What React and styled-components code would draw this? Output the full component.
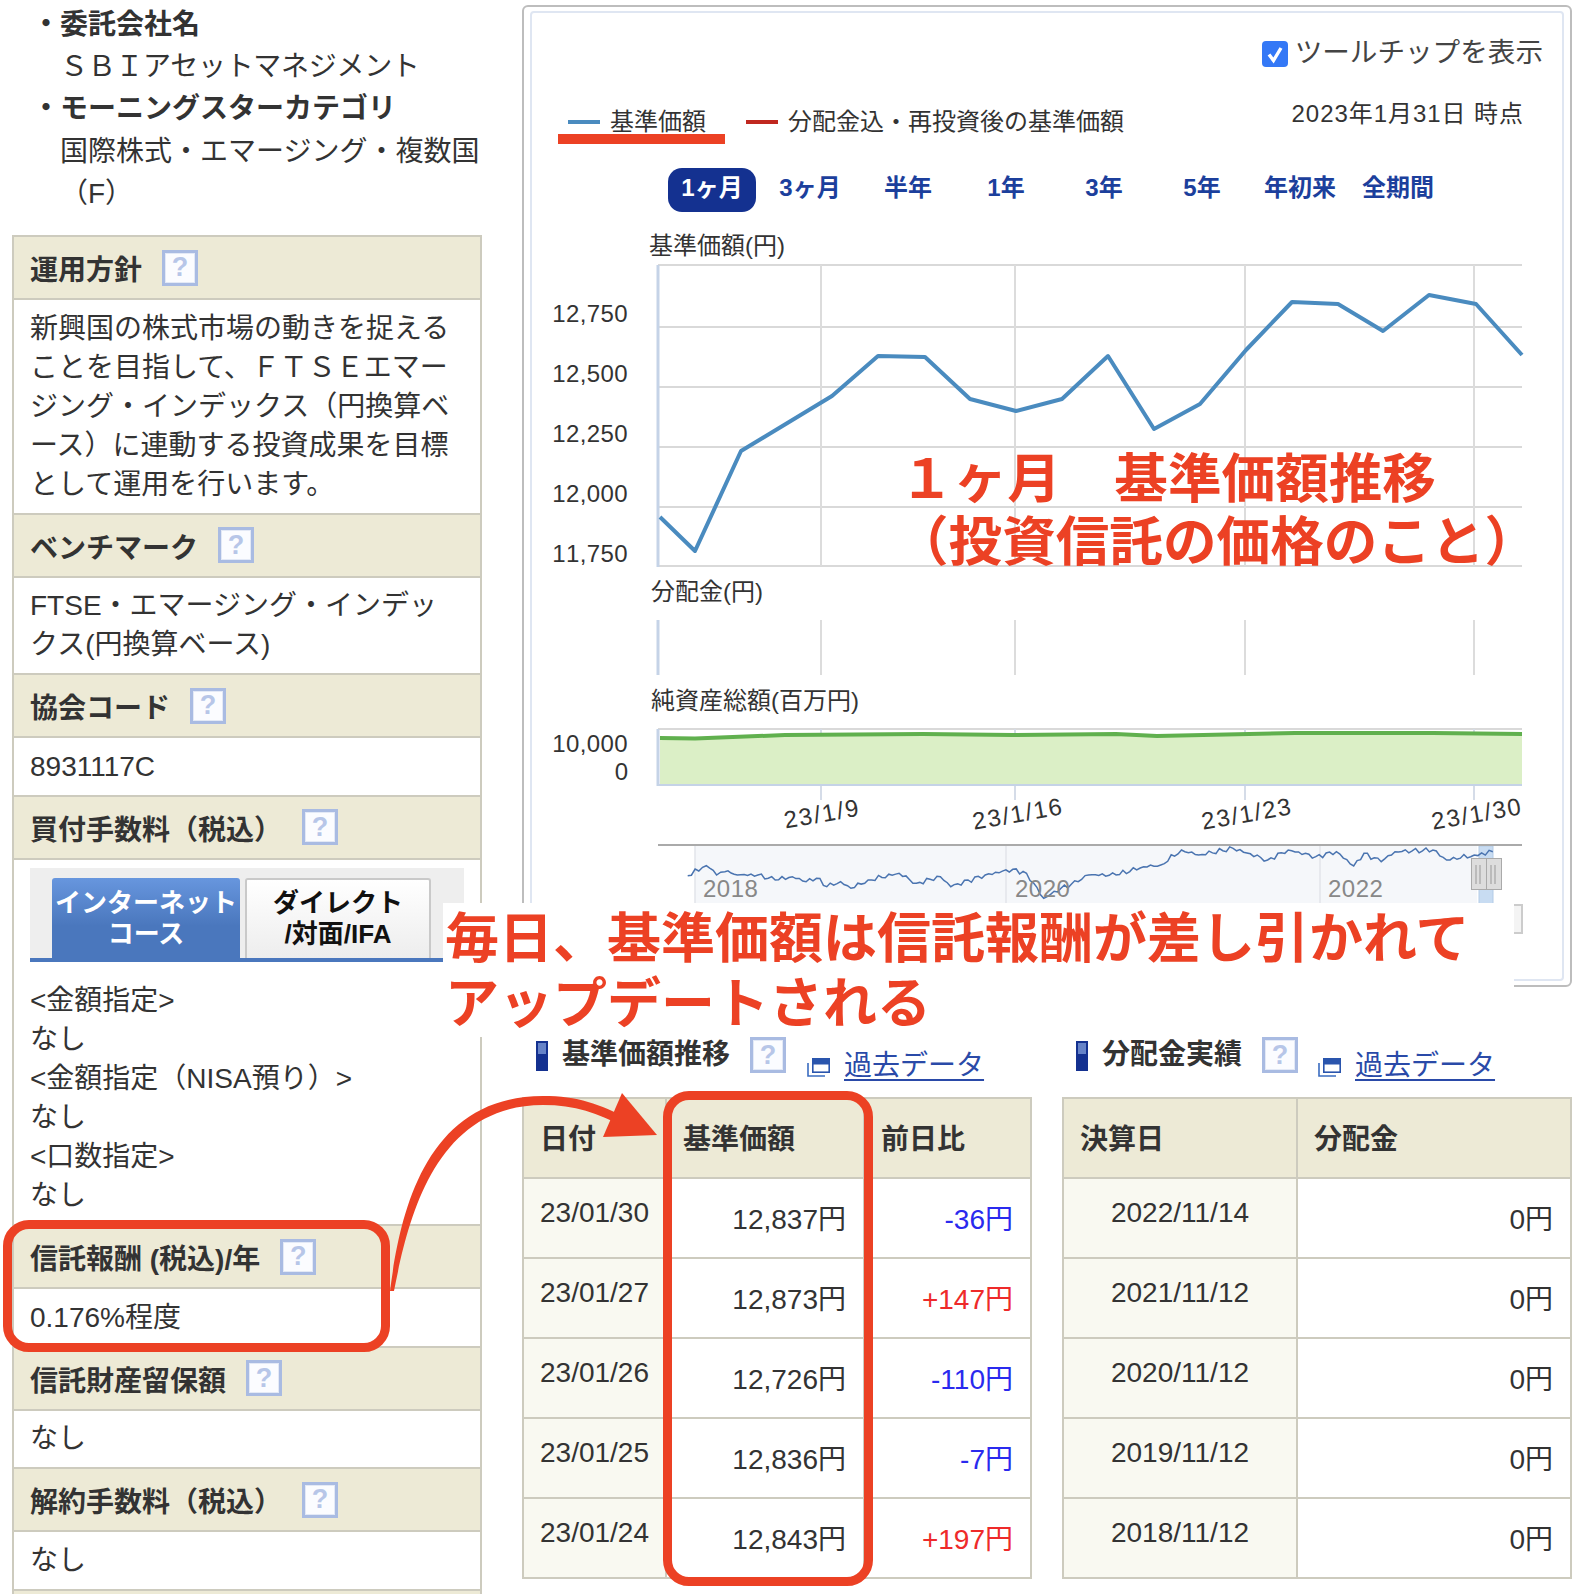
import React from 'react';
import styled, { createGlobalStyle } from 'styled-components';

const RED = '#ec4124';
const LINE = '#cdcbbe';
const HEAD_BG = '#edead6';
const NAVY = '#143190';

const GlobalStyle = createGlobalStyle`
  html, body {
    margin: 0;
    padding: 0;
    background: white;
  }
  body {
    font-family: "Liberation Sans", "Noto Sans CJK JP", sans-serif;
    color: #333;
  }
`;

const Page = styled.div`
  position: relative;
  width: 1590px;
  height: 1594px;
  overflow: hidden;
  display: flex;
  align-items: flex-start;
  font-size: 28px;
  line-height: 39px;
`;

const LeftColumn = styled.div`
  width: 470px;
  margin-left: 12px;
`;

const RightColumn = styled.div`
  width: 1050px;
  margin-left: 40px;
  padding-top: 5px;
`;

/* left column */
const InfoList = styled.ul`
  list-style: none;
  margin: 0;
  padding: 4px 0 0 48px;
  height: 235px;
  box-sizing: border-box;
  line-height: 42.2px;
`;

const InfoTerm = styled.li`
  font-weight: bold;
  position: relative;
  &::before {
    content: '・';
    position: absolute;
    left: -28px;
    top: 0;
  }
`;

const InfoValue = styled.li`
  letter-spacing: ${(p) => p.$spacing || 0}px;
`;

const SectionHead = styled.div`
  height: 65px;
  box-sizing: border-box;
  border: 2px solid ${LINE};
  background: ${HEAD_BG};
  padding-left: 16px;
  display: flex;
  align-items: center;
  gap: 20px;
  font-weight: bold;
  white-space: nowrap;
`;

const SectionName = styled.span`
  margin-top: 6px;
`;

const SectionBody = styled.div`
  border-left: 2px solid ${LINE};
  border-right: 2px solid ${LINE};
  padding: 8.5px 16px 9px;
`;

const Help = styled.span`
  display: inline-flex;
  flex: none;
  align-items: center;
  justify-content: center;
  width: 36px;
  height: 36px;
  box-sizing: border-box;
  border: 3px solid #a9bbe2;
  background: #fbfcff;
  box-shadow: inset 0 0 0 1px #e3e9f6;
  color: #b7c6e8;
  font: bold 27px/1 "Liberation Sans", sans-serif;
`;

const TabBar = styled.div`
  height: 94px;
  box-sizing: border-box;
  background: #eeeeee;
  padding: 10px 0 0 22px;
  border-bottom: 4px solid #4a77bd;
  display: flex;
  gap: 5px;
  margin-bottom: 19px;
`;

const Tab = styled.div`
  width: ${(p) => (p.$active ? 188 : 186)}px;
  box-sizing: border-box;
  padding-top: ${(p) => (p.$active ? 10 : 8)}px;
  border-radius: 3px 3px 0 0;
  text-align: center;
  font-size: 26px;
  line-height: 31px;
  font-weight: bold;
  color: ${(p) => (p.$active ? 'white' : '#111')};
  background: ${(p) =>
    p.$active
      ? 'linear-gradient(#6796de, #4a77bd 60%)'
      : 'linear-gradient(#ffffff, #ededed)'};
  border: ${(p) => (p.$active ? 'none' : '2px solid #c9c9c9')};
  border-bottom: none;
  white-space: nowrap;
`;

/* chart frame */
const Frame = styled.div`
  width: 1050px;
  height: 982px;
  box-sizing: border-box;
  border: 2px solid #bdbdbd;
  border-radius: 6px;
  padding: 4px 6px;
`;

const FrameInner = styled.div`
  height: 100%;
  box-sizing: border-box;
  border: 2px solid #dfe6f2;
  border-radius: 4px;
  overflow: hidden;
`;

const ToolRow = styled.div`
  display: flex;
  justify-content: flex-end;
  align-items: center;
  gap: 7px;
  height: 26px;
  margin-top: 26px;
  padding-right: 19px;
  font-size: 27.6px;
  color: #444;
  white-space: nowrap;
`;

const CheckBox = styled.span`
  width: 26px;
  height: 26px;
  margin-top: 4px;
  border-radius: 4px;
  background: #3478f6;
  display: flex;
  align-items: center;
  justify-content: center;
`;

const LegendRow = styled.div`
  display: flex;
  height: 44px;
  margin-top: 35px;
  padding: 0 38px 0 36px;
  font-size: 24px;
  line-height: 44px;
  white-space: nowrap;
`;

const LegendItem = styled.div`
  display: flex;
  align-items: center;
  gap: 10px;
  margin-right: 40px;
`;

const LegendSwatch = styled.span`
  width: 32px;
  height: 4px;
  background: ${(p) => p.$color};
`;

const AsOf = styled.div`
  margin-left: auto;
  margin-top: 1px;
  line-height: 26px;
  height: 26px;
  letter-spacing: 0.95px;
`;

const RangeTabs = styled.div`
  display: grid;
  grid-template-columns: repeat(8, 98px);
  height: 44px;
  margin-top: 24px;
  padding-left: 131px;
`;

const RangeTab = styled.div`
  width: 88px;
  justify-self: center;
  border-radius: 14px;
  text-align: center;
  font-size: 24px;
  line-height: 40px;
  font-weight: bold;
  white-space: nowrap;
  color: ${(p) => (p.$active ? 'white' : '#1c3f9c')};
  background: ${(p) => (p.$active ? NAVY : 'transparent')};
`;

const ChartSvg = styled.svg`
  display: block;
`;

const ChartText = styled.text`
  font-family: "Liberation Sans", "Noto Sans CJK JP", sans-serif;
  font-size: 24px;
  font-kerning: none;
  letter-spacing: ${(p) => p.$spacing || 0}px;
  fill: ${(p) => p.$fill || '#333'};
`;

/* lower tables */
const Panels = styled.div`
  display: flex;
  gap: 32px;
  margin-top: 50px;
`;

const Panel = styled.div`
  width: 508px;
`;

const PanelTitle = styled.div`
  display: flex;
  align-items: flex-start;
  height: 60px;
  padding-left: 14px;
  white-space: nowrap;
`;

const Mark = styled.span`
  position: relative;
  flex: none;
  width: 12px;
  height: 30px;
  margin-top: 4px;
  background: ${NAVY};
  &::before {
    content: '';
    position: absolute;
    left: 2px;
    top: 2px;
    width: 8px;
    height: 11px;
    background: #6683c8;
  }
`;

const PanelName = styled.span`
  margin-left: 14px;
  font-weight: bold;
  line-height: 36px;
`;

const TitleHelp = styled(Help)`
  margin-left: 20px;
`;

const LinkIcon = styled.svg`
  flex: none;
  margin: 20px 0 0 ${(p) => p.$left}px;
`;

const HistoryLink = styled.a`
  margin: 9px 0 0 14px;
  color: #2a4aa8;
  text-decoration: underline;
  text-underline-offset: 4px;
  line-height: 39px;
`;

const Table = styled.table`
  width: 508px;
  table-layout: fixed;
  border-collapse: collapse;
  border: 2px solid ${LINE};
`;

const Th = styled.th`
  width: ${(p) => p.$w}px;
  height: 80px;
  box-sizing: border-box;
  padding: 2px 0 0 16px;
  border: 2px solid ${LINE};
  background: ${HEAD_BG};
  text-align: left;
  font-weight: bold;
`;

const DateCell = styled.td`
  height: 80px;
  box-sizing: border-box;
  vertical-align: top;
  padding: 14px 0 0;
  border: 2px solid ${LINE};
  background: #f9f9f1;
  text-align: center;
  white-space: nowrap;
`;

const ValueCell = styled.td`
  height: 80px;
  box-sizing: border-box;
  vertical-align: top;
  padding: 21px 17px 0 0;
  border: 2px solid ${LINE};
  text-align: right;
  white-space: nowrap;
  color: ${(p) => p.$color || '#333'};
`;

/* red notes drawn over the page */
const RedBox = styled.div`
  position: absolute;
  box-sizing: border-box;
  left: ${(p) => p.$x}px;
  top: ${(p) => p.$y}px;
  width: ${(p) => p.$w}px;
  height: ${(p) => p.$h}px;
  border: 9px solid ${RED};
  border-radius: 26px;
`;

const RedUnderline = styled.div`
  position: absolute;
  left: 558px;
  top: 134px;
  width: 167px;
  height: 10px;
  background: ${RED};
`;

const ChartNote = styled.div`
  position: absolute;
  left: 895px;
  top: 448px;
  width: 640px;
  height: 118px;
  overflow: hidden;
  color: ${RED};
  font-size: 53.6px;
  line-height: 63px;
  font-weight: bold;
  white-space: nowrap;
`;

const ChartNoteLine = styled.div`
  padding-left: ${(p) => p.$indent || 0}px;
`;

const BigNote = styled.div`
  position: absolute;
  left: 443px;
  top: 903px;
  width: 1071px;
  height: 134px;
  box-sizing: border-box;
  padding: 4px 0 0 2px;
  background: white;
  color: ${RED};
  font-size: 54px;
  line-height: 65px;
  font-weight: bold;
  white-space: nowrap;
`;

const ArrowSvg = styled.svg`
  position: absolute;
  left: 0;
  top: 0;
`;

const PRICE_LINE = [
  [660, 517], [695, 551], [741, 451], [832, 396], [878, 356], [925, 357], [970, 399],
  [1016, 411], [1062, 399], [1108, 356], [1154, 429], [1200, 404], [1246, 350],
  [1292, 302], [1338, 304], [1383, 331], [1429, 295], [1476, 304], [1522, 355],
];

const ASSET_LINE = [
  [660, 738], [695, 738.5], [785, 735], [923, 734], [1013, 735], [1116, 734],
  [1157, 736], [1295, 733], [1433, 733], [1522, 734],
];

// read off the navigator, in zoomed crop coordinates
const NAV_RAW = [
  [258, 887], [285, 857], [300, 885], [312, 875], [330, 885], [360, 885], [385, 900], [410, 890],
  [430, 905], [445, 895], [460, 920], [480, 905], [495, 925], [520, 900], [565, 880], [590, 910],
  [625, 890], [640, 920], [690, 885], [730, 868], [750, 880], [775, 955], [800, 925], [825, 905],
  [840, 885], [880, 885], [920, 860], [945, 855], [975, 810], [1000, 825], [1050, 805], [1100, 840],
  [1130, 810], [1170, 830], [1200, 815], [1225, 858], [1240, 820], [1265, 845], [1285, 815],
  [1340, 810], [1360, 840], [1400, 825], [1427, 815],
];

function navPath() {
  const out = [];
  NAV_RAW.forEach(([x, y], i) => {
    const next = NAV_RAW[i + 1];
    const steps = next ? Math.max(1, Math.round((next[0] - x) / 5)) : 1;
    for (let s = 0; s < steps; s++) {
      const t = s / steps;
      const px = next ? x + (next[0] - x) * t : x;
      const py = next ? y + (next[1] - y) * t : y;
      const noise = s === 0 ? 0 : Math.sin(px * 1.7) * 5 + Math.cos(px * 0.9) * 3;
      out.push(`${(px / 1.452 + 510).toFixed(1)},${(580 + (py + noise) / 3).toFixed(1)}`);
    }
  });
  return out.join(' ');
}

const toPoints = (list) => list.map((p) => p.join(',')).join(' ');

const GRID_X = [821, 1015, 1245, 1474];

function PriceChart() {
  return (
    <ChartSvg width="1028" height="730" viewBox="532 212 1028 730">
      <ChartText x="649" y="254">基準価額(円)</ChartText>
      {[265, 327, 387, 447, 507, 566].map((y) => (
        <line key={y} x1="658" x2="1522" y1={y} y2={y} stroke="#d9d9d9" strokeWidth="2" />
      ))}
      {GRID_X.map((x) => (
        <line key={x} x1={x} x2={x} y1="265" y2="566" stroke="#dcdcdc" strokeWidth="2" />
      ))}
      <line x1="658" x2="658" y1="265" y2="567" stroke="#c5d3e7" strokeWidth="3" />
      {[['12,750', 322], ['12,500', 382], ['12,250', 442], ['12,000', 502], ['11,750', 562]].map(([t, y]) => (
        <ChartText key={t} x="628" y={y} $spacing={0.4} textAnchor="end">{t}</ChartText>
      ))}
      <polyline points={toPoints(PRICE_LINE)} fill="none" stroke="#4a8bbf" strokeWidth="4" strokeLinejoin="round" />

      <ChartText x="651" y="600">分配金(円)</ChartText>
      {GRID_X.map((x) => (
        <line key={x} x1={x} x2={x} y1="620" y2="675" stroke="#dcdcdc" strokeWidth="2" />
      ))}
      <line x1="658" x2="658" y1="620" y2="675" stroke="#c5d3e7" strokeWidth="3" />

      <ChartText x="651" y="709">純資産総額(百万円)</ChartText>
      <line x1="658" x2="1522" y1="729" y2="729" stroke="#d9d9d9" strokeWidth="2" />
      {GRID_X.map((x) => (
        <line key={x} x1={x} x2={x} y1="729" y2="800" stroke="#d5dce8" strokeWidth="2" />
      ))}
      <polygon points={`${toPoints(ASSET_LINE)} 1522,785 660,785`} fill="#dbefc6" />
      <polyline points={toPoints(ASSET_LINE)} fill="none" stroke="#60b04e" strokeWidth="4" />
      <line x1="658" x2="1522" y1="785" y2="785" stroke="#c5d3e7" strokeWidth="2" />
      <line x1="658" x2="658" y1="729" y2="786" stroke="#c5d3e7" strokeWidth="3" />
      <ChartText x="628" y="752" $spacing={0.4} textAnchor="end">10,000</ChartText>
      <ChartText x="628" y="780" textAnchor="end">0</ChartText>
      {[['23/1/9', 822], ['23/1/16', 1018], ['23/1/23', 1247], ['23/1/30', 1477]].map(([t, x]) => (
        <ChartText key={t} x={x} y="822" $spacing={1.7} textAnchor="middle" transform={`rotate(-10 ${x} 814)`}>{t}</ChartText>
      ))}

      <rect x="695" y="846" width="782" height="66" fill="#f5f7fa" />
      {[695, 1006, 1320].map((x) => (
        <line key={x} x1={x} x2={x} y1="846" y2="912" stroke="#e2e5ea" strokeWidth="1.5" />
      ))}
      <rect x="1479" y="846" width="14" height="66" fill="#c8dcf2" stroke="#b3cbe6" />
      <polyline points={navPath()} fill="none" stroke="#4a74b0" strokeWidth="1.5" />
      <line x1="658" x2="1522" y1="845" y2="845" stroke="#aaaaaa" strokeWidth="2" />
      <ChartText x="703" y="897" $fill="#888" $spacing={0.5}>2018</ChartText>
      <ChartText x="1015" y="897" $fill="#888" $spacing={0.5}>2020</ChartText>
      <ChartText x="1328" y="897" $fill="#888" $spacing={0.5}>2022</ChartText>
      <rect x="1471.5" y="858.5" width="30" height="31" fill="#dddddd" stroke="#aaaaaa" />
      <line x1="1486.5" x2="1486.5" y1="858.5" y2="889.5" stroke="#aaaaaa" />
      {[1476, 1480, 1491, 1495].map((x) => (
        <line key={x} x1={x} x2={x} y1="865" y2="884" stroke="#999999" />
      ))}
      <rect x="1500" y="905" width="22" height="28" fill="#f4f4f4" stroke="#cccccc" strokeWidth="2" />
    </ChartSvg>
  );
}

function WindowIcon({ left }) {
  return (
    <LinkIcon $left={left} width="23" height="20" viewBox="0 0 23 20">
      <path d="M1 6 V19 H18" fill="none" stroke="#3a6cc0" strokeWidth="1.6" />
      <rect x="5.8" y="1.8" width="16.4" height="13.4" fill="white" stroke="#2a55ad" strokeWidth="1.6" />
      <rect x="5" y="1" width="18" height="6.5" fill="#2a55ad" />
    </LinkIcon>
  );
}

const PRICES = [
  ['23/01/30', '12,837円', '-36円', '#2a2aee'],
  ['23/01/27', '12,873円', '+147円', '#ee2a2a'],
  ['23/01/26', '12,726円', '-110円', '#2a2aee'],
  ['23/01/25', '12,836円', '-7円', '#2a2aee'],
  ['23/01/24', '12,843円', '+197円', '#ee2a2a'],
];

const PAYOUTS = ['2022/11/14', '2021/11/12', '2020/11/12', '2019/11/12', '2018/11/12'];

const RANGES = ['1ヶ月', '3ヶ月', '半年', '1年', '3年', '5年', '年初来', '全期間'];

function Section({ title, children }) {
  return (
    <>
      <SectionHead>
        <SectionName>{title}</SectionName>
        <Help>?</Help>
      </SectionHead>
      <SectionBody>{children}</SectionBody>
    </>
  );
}

export default function App() {
  return (
    <Page>
      <GlobalStyle />
      <LeftColumn>
        <InfoList>
          <InfoTerm>委託会社名</InfoTerm>
          <InfoValue $spacing={-0.3}>ＳＢＩアセットマネジメント</InfoValue>
          <InfoTerm>モーニングスターカテゴリ</InfoTerm>
          <InfoValue>国際株式・エマージング・複数国（F）</InfoValue>
        </InfoList>
        <Section title="運用方針">
          新興国の株式市場の動きを捉えることを目指して、ＦＴＳＥエマージング・インデックス（円換算ベース）に連動する投資成果を目標として運用を行います。
        </Section>
        <Section title="ベンチマーク">FTSE・エマージング・インデックス(円換算ベース)</Section>
        <Section title="協会コード">8931117C</Section>
        <Section title="買付手数料（税込）">
          <TabBar>
            <Tab $active>インターネット<br />コース</Tab>
            <Tab>ダイレクト<br />/対面/IFA</Tab>
          </TabBar>
          &lt;金額指定&gt;<br />
          なし<br />
          &lt;金額指定（NISA預り）&gt;<br />
          なし<br />
          &lt;口数指定&gt;<br />
          なし
        </Section>
        <Section title="信託報酬 (税込)/年">0.176%程度</Section>
        <Section title="信託財産留保額">なし</Section>
        <Section title="解約手数料（税込）">なし</Section>
        <SectionHead />
      </LeftColumn>

      <RightColumn>
        <Frame>
          <FrameInner>
            <ToolRow>
              <CheckBox>
                <svg width="22" height="22" viewBox="0 0 22 22">
                  <path d="M5 11.5 L9.5 17.5 L17 5" fill="none" stroke="white" strokeWidth="3.4" />
                </svg>
              </CheckBox>
              ツールチップを表示
            </ToolRow>
            <LegendRow>
              <LegendItem>
                <LegendSwatch $color="#4a8bbf" />
                基準価額
              </LegendItem>
              <LegendItem>
                <LegendSwatch $color="#c0281f" />
                分配金込・再投資後の基準価額
              </LegendItem>
              <AsOf>2023年1月31日 時点</AsOf>
            </LegendRow>
            <RangeTabs>
              {RANGES.map((r, i) => (
                <RangeTab key={r} $active={i === 0}>{r}</RangeTab>
              ))}
            </RangeTabs>
            <PriceChart />
          </FrameInner>
        </Frame>

        <Panels>
          <Panel>
            <PanelTitle>
              <Mark />
              <PanelName>基準価額推移</PanelName>
              <TitleHelp>?</TitleHelp>
              <WindowIcon left={21} />
              <HistoryLink href="#">過去データ</HistoryLink>
            </PanelTitle>
            <Table>
              <thead>
                <tr>
                  <Th $w={143}>日付</Th>
                  <Th $w={198}>基準価額</Th>
                  <Th $w={167}>前日比</Th>
                </tr>
              </thead>
              <tbody>
                {PRICES.map(([date, price, diff, color]) => (
                  <tr key={date}>
                    <DateCell>{date}</DateCell>
                    <ValueCell>{price}</ValueCell>
                    <ValueCell $color={color}>{diff}</ValueCell>
                  </tr>
                ))}
              </tbody>
            </Table>
          </Panel>
          <Panel>
            <PanelTitle>
              <Mark />
              <PanelName>分配金実績</PanelName>
              <TitleHelp>?</TitleHelp>
              <WindowIcon left={20} />
              <HistoryLink href="#">過去データ</HistoryLink>
            </PanelTitle>
            <Table>
              <thead>
                <tr>
                  <Th $w={234}>決算日</Th>
                  <Th $w={274}>分配金</Th>
                </tr>
              </thead>
              <tbody>
                {PAYOUTS.map((date) => (
                  <tr key={date}>
                    <DateCell>{date}</DateCell>
                    <ValueCell>0円</ValueCell>
                  </tr>
                ))}
              </tbody>
            </Table>
          </Panel>
        </Panels>
      </RightColumn>

      <RedUnderline />
      <ChartNote>
        <ChartNoteLine $indent={5}>１ヶ月　基準価額推移</ChartNoteLine>
        <ChartNoteLine>（投資信託の価格のこと）</ChartNoteLine>
      </ChartNote>
      <BigNote>
        毎日、基準価額は信託報酬が差し引かれて<br />
        アップデートされる
      </BigNote>
      <RedBox $x={3} $y={1220} $w={387} $h={132} />
      <RedBox $x={663} $y={1091} $w={210} $h={495} />
      <ArrowSvg width="1590" height="1594" viewBox="0 0 1590 1594">
        <path
          d="M390 1291 C400 1215 424 1096 543 1096 C578 1096 600 1104 628 1119 L624 1127 C598 1113 575 1105 543 1105 C434 1105 408 1220 394 1291 Z"
          fill={RED}
        />
        <polygon points="622,1093 657,1135 603,1137" fill={RED} />
      </ArrowSvg>
    </Page>
  );
}
